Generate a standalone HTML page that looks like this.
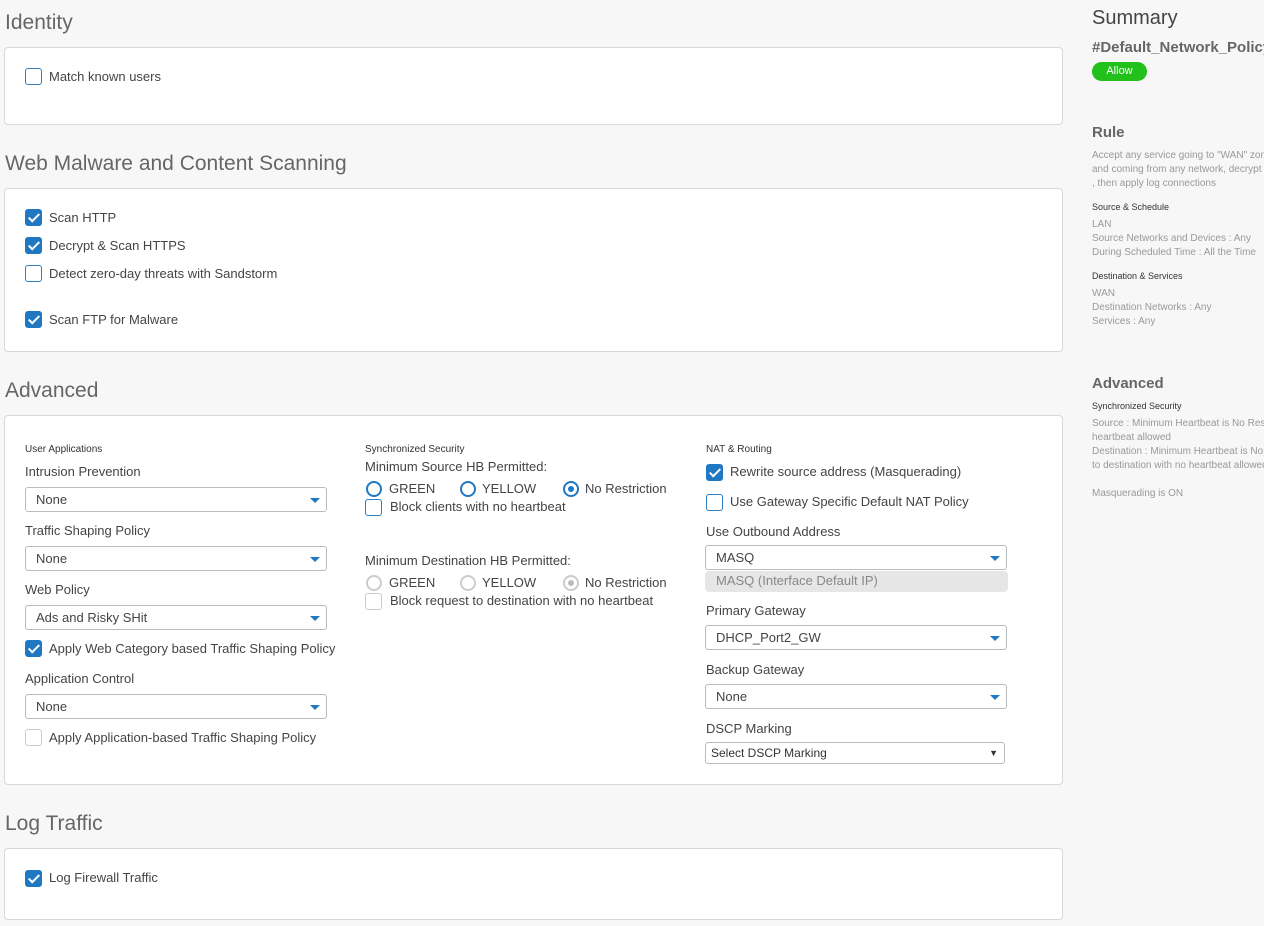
<!DOCTYPE html>
<html><head><meta charset="utf-8"><style>
*{box-sizing:border-box;margin:0;padding:0}
body{width:1264px;height:926px;overflow:hidden;background:#f7f7f7;font-family:"Liberation Sans",sans-serif;color:#444;font-size:13px;position:relative}
.a{position:absolute;white-space:nowrap}
.h{font-size:21px;color:#666}
.p{position:absolute;left:4px;width:1059px;background:#fff;border:1px solid #d8d8d8;border-radius:4px}
.cb{position:absolute;width:17px;height:17px;border:1.5px solid #2c7fc2;border-radius:3px;background:#fff}
.cb.on{background:#1f78c1;border-color:#1f78c1}
.cb.on:after{content:"";position:absolute;left:5px;top:1px;width:4px;height:9px;border:solid #fff;border-width:0 2.5px 2.5px 0;transform:rotate(45deg)}
.cb.dis{border-color:#ccc}
.sel{position:absolute;height:25px;border:1px solid #bbb;border-radius:3px;background:#fff;padding-left:10px;line-height:23px;color:#444}
.sel:after{content:"";position:absolute;right:6px;top:10px;border-left:5px solid transparent;border-right:5px solid transparent;border-top:5px solid #1f78c1}
.rd{position:absolute;width:16px;height:16px;border:2px solid #1f78c1;border-radius:50%;background:#fff}
.rd.on:after{content:"";position:absolute;left:3px;top:3px;width:6px;height:6px;border-radius:50%;background:#1f78c1}
.rd.dis{border-color:#ccc}
.rd.dis.on:after{background:#bbb}
.sm{font-size:10px;color:#333}
.g{color:#999;font-size:10px}
</style></head><body>
<div class="a h" style="left:5px;top:11px">Identity</div>
<div class="p" style="top:47px;height:78px"></div>
<div class="cb" style="left:25px;top:68px"></div><div class="a" style="left:49px;top:69px">Match known users</div>

<div class="a h" style="left:5px;top:152px">Web Malware and Content Scanning</div>
<div class="p" style="top:188px;height:164px"></div>
<div class="cb on" style="left:25px;top:209px"></div><div class="a" style="left:49px;top:210px">Scan HTTP</div>
<div class="cb on" style="left:25px;top:237px"></div><div class="a" style="left:49px;top:238px">Decrypt &amp; Scan HTTPS</div>
<div class="cb" style="left:25px;top:265px"></div><div class="a" style="left:49px;top:266px">Detect zero-day threats with Sandstorm</div>
<div class="cb on" style="left:25px;top:311px"></div><div class="a" style="left:49px;top:312px">Scan FTP for Malware</div>

<div class="a h" style="left:5px;top:379px">Advanced</div>
<div class="p" style="top:415px;height:370px"></div>
<div class="a sm" style="left:25px;top:444px">User Applications</div>
<div class="a" style="left:25px;top:464px">Intrusion Prevention</div>
<div class="sel" style="left:25px;top:487px;width:302px">None</div>
<div class="a" style="left:25px;top:523px">Traffic Shaping Policy</div>
<div class="sel" style="left:25px;top:546px;width:302px">None</div>
<div class="a" style="left:25px;top:582px">Web Policy</div>
<div class="sel" style="left:25px;top:605px;width:302px">Ads and Risky SHit</div>
<div class="cb on" style="left:25px;top:640px"></div><div class="a" style="left:49px;top:641px">Apply Web Category based Traffic Shaping Policy</div>
<div class="a" style="left:25px;top:671px">Application Control</div>
<div class="sel" style="left:25px;top:694px;width:302px">None</div>
<div class="cb dis" style="left:25px;top:729px"></div><div class="a" style="left:49px;top:730px">Apply Application-based Traffic Shaping Policy</div>

<div class="a sm" style="left:365px;top:444px">Synchronized Security</div>
<div class="a" style="left:365px;top:459px">Minimum Source HB Permitted:</div>
<div class="rd" style="left:366px;top:481px"></div><div class="a" style="left:389px;top:481px">GREEN</div>
<div class="rd" style="left:460px;top:481px"></div><div class="a" style="left:482px;top:481px">YELLOW</div>
<div class="rd on" style="left:563px;top:481px"></div><div class="a" style="left:585px;top:481px">No Restriction</div>
<div class="cb" style="left:365px;top:499px"></div><div class="a" style="left:390px;top:499px">Block clients with no heartbeat</div>
<div class="a" style="left:365px;top:553px">Minimum Destination HB Permitted:</div>
<div class="rd dis" style="left:366px;top:575px"></div><div class="a" style="left:389px;top:575px">GREEN</div>
<div class="rd dis" style="left:460px;top:575px"></div><div class="a" style="left:482px;top:575px">YELLOW</div>
<div class="rd dis on" style="left:563px;top:575px"></div><div class="a" style="left:585px;top:575px">No Restriction</div>
<div class="cb dis" style="left:365px;top:593px"></div><div class="a" style="left:390px;top:593px">Block request to destination with no heartbeat</div>

<div class="a sm" style="left:706px;top:444px">NAT &amp; Routing</div>
<div class="cb on" style="left:706px;top:464px"></div><div class="a" style="left:730px;top:464px">Rewrite source address (Masquerading)</div>
<div class="cb" style="left:706px;top:494px"></div><div class="a" style="left:730px;top:494px">Use Gateway Specific Default NAT Policy</div>
<div class="a" style="left:706px;top:524px">Use Outbound Address</div>
<div class="a" style="left:705px;top:571px;width:303px;height:21px;background:#e6e6e6;border-radius:4px;color:#888;padding-left:11px;line-height:19px">MASQ (Interface Default IP)</div>
<div class="sel" style="left:705px;top:545px;width:302px">MASQ</div>
<div class="a" style="left:706px;top:603px">Primary Gateway</div>
<div class="sel" style="left:705px;top:625px;width:302px">DHCP_Port2_GW</div>
<div class="a" style="left:706px;top:662px">Backup Gateway</div>
<div class="sel" style="left:705px;top:684px;width:302px">None</div>
<div class="a" style="left:706px;top:721px">DSCP Marking</div>
<div class="a" style="left:705px;top:742px;width:300px;height:22px;border:1px solid #bbb;border-radius:3px;background:#fff;font-size:12px;padding-left:5px;line-height:20px;color:#333">Select DSCP Marking<span style="position:absolute;right:6px;font-size:9px">▼</span></div>

<div class="a h" style="left:5px;top:812px">Log Traffic</div>
<div class="p" style="top:848px;height:72px"></div>
<div class="cb on" style="left:25px;top:870px"></div><div class="a" style="left:49px;top:870px">Log Firewall Traffic</div>

<div class="a" style="left:1092px;top:7px;font-size:20px;color:#444">Summary</div>
<div class="a" style="left:1092px;top:39px;font-size:15px;font-weight:bold;color:#666">#Default_Network_Policy</div>
<div class="a" style="left:1092px;top:62px;width:55px;height:19px;border-radius:10px;background:#22c01a;color:#fff;font-size:11px;text-align:center;line-height:18px">Allow</div>
<div class="a" style="left:1092px;top:124px;font-size:15px;font-weight:bold;color:#666">Rule</div>
<div class="a g" style="left:1092px;top:149px;line-height:14px">Accept any service going to "WAN" zone<br>and coming from any network, decrypt<br>, then apply log connections</div>
<div class="a sm" style="left:1092px;top:202px;font-size:9px">Source &amp; Schedule</div>
<div class="a g" style="left:1092px;top:218px;line-height:14px">LAN<br>Source Networks and Devices : Any<br>During Scheduled Time : All the Time</div>
<div class="a sm" style="left:1092px;top:271px;font-size:9px">Destination &amp; Services</div>
<div class="a g" style="left:1092px;top:287px;line-height:14px">WAN<br>Destination Networks : Any<br>Services : Any</div>
<div class="a" style="left:1092px;top:375px;font-size:15px;font-weight:bold;color:#666">Advanced</div>
<div class="a sm" style="left:1092px;top:401px;font-size:9px">Synchronized Security</div>
<div class="a g" style="left:1092px;top:417px;line-height:14px">Source : Minimum Heartbeat is No Restriction<br>heartbeat allowed<br>Destination : Minimum Heartbeat is No<br>to destination with no heartbeat allowed<br><br>Masquerading is ON</div>
</body></html>
